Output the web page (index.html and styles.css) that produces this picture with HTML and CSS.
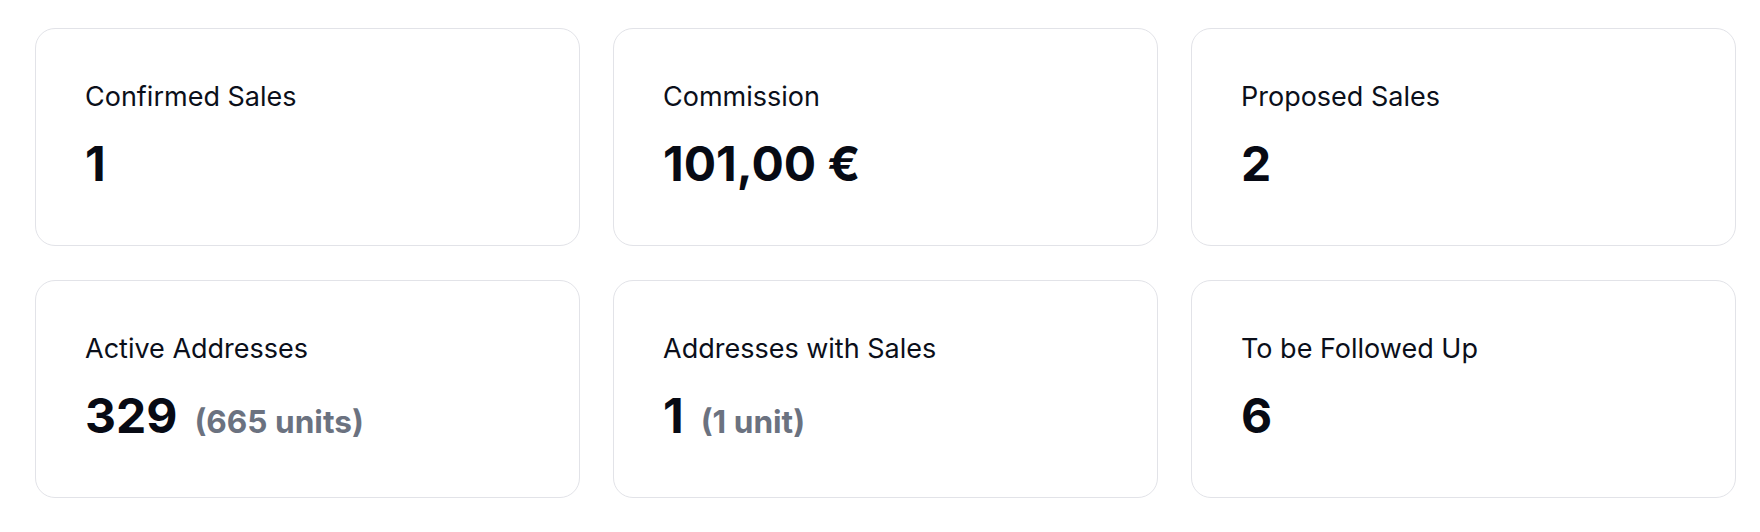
FILE: index.html
```html
<!DOCTYPE html>
<html lang="en">
<head>
<meta charset="utf-8">
<title>Stats</title>
<link rel="stylesheet" href="styles.css">
</head>
<body>
<main class="stats">
  <div class="card">
    <div class="label">Confirmed Sales</div>
    <div class="value">1</div>
  </div>
  <div class="card">
    <div class="label">Commission</div>
    <div class="value">101,00 €</div>
  </div>
  <div class="card">
    <div class="label">Proposed Sales</div>
    <div class="value">2</div>
  </div>
  <div class="card">
    <div class="label">Active Addresses</div>
    <div class="value">329 <span class="sub">(665 units)</span></div>
  </div>
  <div class="card">
    <div class="label">Addresses with Sales</div>
    <div class="value">1 <span class="sub">(1 unit)</span></div>
  </div>
  <div class="card">
    <div class="label">To be Followed Up</div>
    <div class="value">6</div>
  </div>
</main>
</body>
</html>
```
FILE: styles.css
```css
* { box-sizing: border-box; }
html, body { margin: 0; padding: 0; background: #ffffff; }
body {
  font-family: Inter, "Noto Sans", sans-serif;
  color: #111827;
}
.stats {
  display: grid;
  grid-template-columns: repeat(3, 545px);
  column-gap: 33px;
  row-gap: 34px;
  padding: 28px 24px 0 35px;
}
.card {
  height: 218px;
  border: 1px solid #e2e3e8;
  border-radius: 20px;
  padding: 52px 48px 52px 49px;
  background: #fff;
}
.label {
  font-size: 27px;
  line-height: 32px;
  font-weight: 400;
  color: #0b0f1a;
}
.value {
  margin-top: 21px;
  font-size: 48px;
  line-height: 60px;
  font-weight: 700;
  color: #070a14;
  display: flex;
  align-items: baseline;
  gap: 17px;
}
.sub {
  font-size: 31.6px;
  font-weight: 700;
  color: #6b7280;
}
```
